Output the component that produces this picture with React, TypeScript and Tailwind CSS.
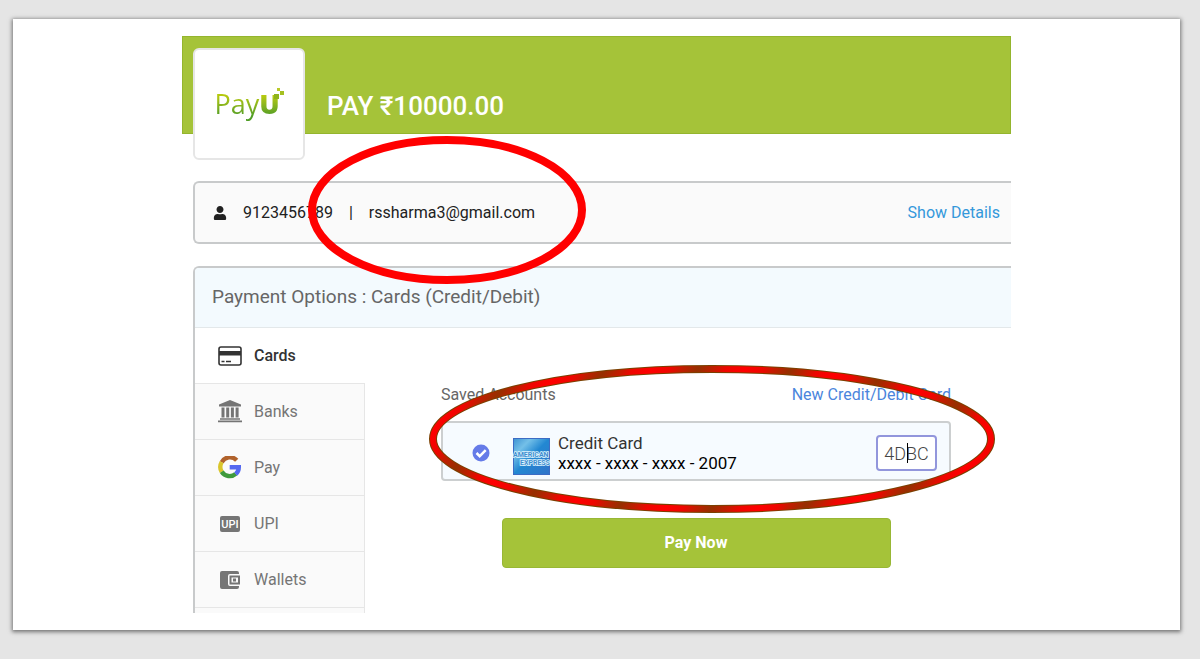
import type { ReactNode } from "react";
import { FaUser } from "react-icons/fa";

type PaymentOption = {
  label: string;
  icon: ReactNode;
};

function CardIcon() {
  return (
    <svg width="24" height="20" viewBox="0 0 24 20" className="text-[#333]">
      <rect x="1" y="1" width="22" height="18" rx="2" fill="#fff" stroke="currentColor" strokeWidth="1.6" />
      <path d="M1 5h22v4.500H1z" fill="currentColor" />
      <path d="M3.500 15.500h3M8 15.500h5" stroke="currentColor" strokeWidth="1.600" />
    </svg>
  );
}

function BankIcon() {
  return (
    <svg width="24" height="24" viewBox="0 0 24 24" fill="currentColor">
      <path d="M12 0 1 4.500V6.500h22V4.500zM3.500 7.500h3v10h-3zM8.200 7.500h3v10h-3zM12.900 7.500h3v10h-3zM17.600 7.500h3v10h-3zM2 18.200h20v1.500H2zM0 20.400h24v1.800H0z" />
    </svg>
  );
}

function GoogleIcon() {
  return (
    <svg width="24" height="24" viewBox="0 0 24 24" fill="none" strokeWidth="4.400">
      <path d="M18.700 4.300A9.300 9.300 0 0 0 3.700 6.200" stroke="#b0622c" />
      <path d="M3.700 6.200a9.300 9.300 0 0 0 0 9.600" stroke="#d9c52b" />
      <path d="M3.700 15.800a9.300 9.300 0 0 0 14 2" stroke="#3f9a3c" />
      <path d="M11.700 11.200h9.100c0 3-1 5.100-3.100 6.900" stroke="#5468f0" />
    </svg>
  );
}

function UpiIcon() {
  return (
    <svg width="22" height="18" viewBox="0 0 22 18">
      <rect x="1" y="1" width="20" height="16" rx="2" fill="currentColor" />
      <text x="11" y="13" textAnchor="middle" fill="#fff" fontSize="11" fontWeight="500" className="font-['Roboto',sans-serif]">
        UPI
      </text>
    </svg>
  );
}

function WalletIcon() {
  return (
    <svg width="22" height="20" viewBox="0 0 22 20" fill="currentColor">
      <path d="M3 1h15a2 2 0 0 1 2 2v1h-9a2 2 0 0 0-2 2v8a2 2 0 0 0 2 2h9v1a2 2 0 0 1-2 2H3a2 2 0 0 1-2-2V3a2 2 0 0 1 2-2z" />
      <path fillRule="evenodd" d="M10.500 5.500H21v9H10.500zm2 2v5h6.500v-5z" />
      <path d="M14 8.500h3v3h-3z" />
    </svg>
  );
}

const options: PaymentOption[] = [
  { label: "Banks", icon: <BankIcon /> },
  { label: "Pay", icon: <GoogleIcon /> },
  { label: "UPI", icon: <UpiIcon /> },
  { label: "Wallets", icon: <WalletIcon /> },
];

function PayULogo() {
  return (
    <div className="relative flex h-28 w-28 shrink-0 items-center justify-center rounded-md border-2 border-[#e6e6e6] bg-white pr-1">
      <div className="flex bg-linear-to-b from-[#b5c90f] from-30% to-[#4f9d25] to-80% bg-clip-text font-['Open_Sans',sans-serif] text-[27px] text-transparent">
        <span>Pay</span>
        <span className="font-extrabold">U</span>
      </div>
      <svg width="12" height="14" viewBox="0 0 12 14" className="absolute top-[38px] right-[18px]">
        <path d="M4 0h3v3H4z" fill="#b9c928" />
        <path d="M7 3h4v4H7z" fill="#a5c020" />
        <path d="M1 6h5v5H1z" fill="#8fb31c" />
      </svg>
    </div>
  );
}

function AmexIcon() {
  return (
    <svg width="37" height="37" viewBox="0 0 37 37" className="mb-1 shrink-0 self-end">
      <defs>
        <linearGradient id="amex" x1="0" y1="0" x2="1" y2="1">
          <stop offset="0" stopColor="#3a8fd0" />
          <stop offset="0.25" stopColor="#74c0e8" />
          <stop offset="0.5" stopColor="#2388d2" />
          <stop offset="1" stopColor="#3173c8" />
        </linearGradient>
      </defs>
      <rect width="37" height="37" fill="url(#amex)" />
      <rect x="0.5" y="0.5" width="36" height="36" fill="none" stroke="#3c6cc4" />
      <g fill="#3f8fd0" stroke="#dcf2fc" strokeWidth="1.500" paintOrder="stroke" fontSize="7" fontWeight="700" className="font-['Roboto',sans-serif]">
        <text x="0" y="19">AMERICAN</text>
        <text x="7" y="27">EXPRESS</text>
      </g>
    </svg>
  );
}

export default function App() {
  return (
    <div className="min-h-screen bg-[#e5e5e5] pt-[19px] pr-5 pb-7 pl-[13px] font-['Roboto',sans-serif] text-base text-[#212121]">
      <main className="bg-white py-[17px] shadow-[0_1px_4px_1px_rgba(0,0,0,0.5)]">
        <div className="relative mx-auto max-w-[829px]">
          <header className="flex h-[98px] gap-[22px] border border-[#94b52d] bg-[#a5c339] pt-[11px] pl-[10px]">
            <PayULogo />
            <h1 className="mt-[42px] text-[26px] leading-8 font-medium text-white">PAY ₹10000.00</h1>
          </header>

          <section className="mt-[47px] ml-[11px] flex h-[63px] items-center rounded-l-md border-y-2 border-l-2 border-[#c8cacb] bg-[#fafafa] pr-[11px] pl-[18px]">
            <FaUser size={14} />
            <span className="ml-4">9123456789</span>
            <span className="mx-4">|</span>
            <span>rssharma3@gmail.com</span>
            <a href="#details" className="ml-auto text-[#3498db]">
              Show Details
            </a>
          </section>

          <section className="mt-[22px] ml-[11px] rounded-tl-md border-t-2 border-l-2 border-[#c8cacb]">
            <h2 className="flex h-[60px] items-center rounded-tl border-b border-[#e3e8ea] bg-[#f3fafe] pl-[17px] text-[19px] text-[#666]">
              Payment Options : Cards (Credit/Debit)
            </h2>

            <div className="flex">
              <nav className="w-[170px] shrink-0">
                <button type="button" className="flex h-[55px] w-full items-center pl-[23px] font-medium text-[#333]">
                  <span className="mr-3 flex w-6 justify-center">
                    <CardIcon />
                  </span>
                  Cards
                </button>
                <div className="border-r border-[#e6e6e6] bg-[#fafafa]">
                  {options.map((option) => (
                    <button
                      key={option.label}
                      type="button"
                      className="flex h-14 w-full items-center border-t border-[#e6e6e6] pl-[23px] text-[#757575]"
                    >
                      <span className="mr-3 flex w-6 justify-center">{option.icon}</span>
                      {option.label}
                    </button>
                  ))}
                  <div className="h-[6px] border-t border-[#e6e6e6]" />
                </div>
              </nav>

              <form className="mr-[60px] ml-[76px] flex-1 pt-[55px]" onSubmit={(event) => event.preventDefault()}>
                <div className="flex justify-between text-[#666]">
                  <span>Saved Accounts</span>
                  <a href="#new-card" className="text-[#4b85dc]">
                    New Credit/Debit Card
                  </a>
                </div>

                <div className="mt-[14px] flex h-[60px] items-center rounded border-2 border-[#cccfd0] bg-[#f6fbff] pt-1 pr-3 pl-[29px]">
                  <svg width="18" height="18" viewBox="0 0 18 18" className="mr-[23px] shrink-0">
                    <circle cx="9" cy="9" r="8.500" fill="#657be8" />
                    <path d="m4.500 9 3.200 3.200 6-6" fill="none" stroke="#fff" strokeWidth="2.500" />
                  </svg>
                  <AmexIcon />
                  <div className="ml-2 text-[17px] leading-5">
                    <div className="text-[#333]">Credit Card</div>
                    <div className="text-black">xxxx - xxxx - xxxx - 2007</div>
                  </div>
                  <div className="relative ml-auto">
                    <input
                      aria-label="Card security code"
                      defaultValue="4DBC"
                      className="h-9 w-[61px] rounded-sm border-2 border-[#9296dc] bg-white text-center text-lg font-light text-[#444] outline-none"
                    />
                    <span className="absolute top-2 left-[31px] h-5 w-px bg-black" />
                  </div>
                </div>

                <button
                  type="submit"
                  className="mx-auto mt-[37px] block h-[50px] w-[389px] max-w-full rounded border border-[#98b735] bg-[#a5c339] font-bold text-white"
                >
                  Pay Now
                </button>
              </form>
            </div>
          </section>

          {/* hand-drawn style callouts */}
          <svg className="pointer-events-none absolute top-0 left-0 h-[577px] w-[829px]" viewBox="0 0 829 577" fill="none">
            <defs>
              <linearGradient id="ring" gradientUnits="userSpaceOnUse" x1="242" y1="0" x2="277" y2="20" spreadMethod="reflect">
                <stop offset="0" stopColor="#963000" />
                <stop offset="0.35" stopColor="#c41c00" />
                <stop offset="0.6" stopColor="#ee0600" />
                <stop offset="1" stopColor="#ff0000" />
              </linearGradient>
            </defs>
            <ellipse cx="265" cy="174" rx="135" ry="70" stroke="#ff0000" strokeWidth="8" />
            <ellipse cx="530" cy="403" rx="279" ry="70" stroke="#7a4000" strokeWidth="8" />
            <ellipse cx="530" cy="403" rx="279" ry="70" stroke="url(#ring)" strokeWidth="6" />
          </svg>
        </div>
      </main>
    </div>
  );
}
